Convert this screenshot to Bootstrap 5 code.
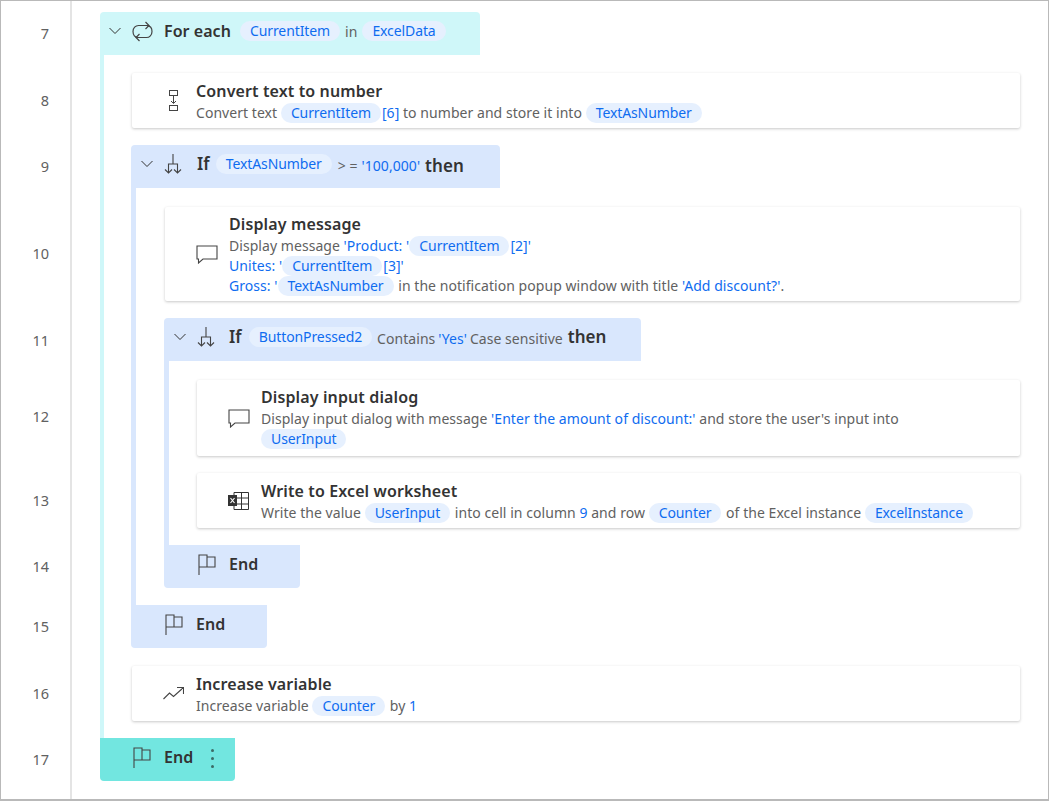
<!DOCTYPE html>
<html lang="en">
<head>
<meta charset="utf-8">
<title>Flow</title>
<link rel="stylesheet" href="https://cdn.jsdelivr.net/npm/bootstrap@5.3.0/dist/css/bootstrap.min.css">
<style>
html,body{margin:0;background:#fff}
body{font-family:"Noto Sans","Open Sans","Liberation Sans",sans-serif;color:#333;font-size:14px;overflow:hidden}
.frame{width:1049px;height:801px;border:1px solid #b9b9b9;border-width:1px 1px 2px 1px;overflow:hidden}
.gutter{width:69px;flex:none;border-right:2px solid #e4e4e4;padding-top:11px;color:#616161;font-size:14.5px;box-sizing:content-box}
.gutter>div{display:flex;align-items:center;justify-content:flex-end;padding-right:21px}
.h7,.h11,.h15,.h17{height:43px}.h8{height:91px}.h9{height:42px}.h10{height:130px}.h12{height:112px}.h13{height:55px}.h14{height:77px}.h16{height:90px}
.gutter>.h10,.gutter>.h11,.gutter>.h16{padding-top:2px}
.canvas{padding:11px 0 0 28px;width:948px;letter-spacing:.05px}
.head{height:43px;display:flex;align-items:center;border-radius:4px 4px 0 0;white-space:nowrap;padding-bottom:5px}
.tl{font-size:16px;font-weight:600;color:#333}
.tb{font-size:17px;font-weight:600;color:#333}
.loop-head{background:#cff7f9;width:380px}
.if-head{background:#d9e7fd}
.w369{width:369px}.w477{width:477px}
.chev{width:12px;height:8px;margin:0 11px 0 9px;flex:none}
.if-head .chev{margin-left:10px}
.ic{flex:none;display:block}
.rail-loop{border-left:4px solid #cff7f9;padding:18px 0 17px 28px}
.rail-if{border-left:5px solid #d9e7fd;padding:19px 0 17px 29px;margin-left:-1px}
.rail-if .rail-if{padding-left:28px}
.rail-if .rail-if .step{margin-right:0}
.end{height:43px;display:flex;align-items:center;font-size:16px;font-weight:600;border-radius:0 0 4px 4px;padding-bottom:5px}
.end-if{background:#d9e7fd;width:136px;margin-left:-1px;padding-left:34px;height:43px}
.end-loop{background:#72e6e0;width:135px;padding-left:33px}
.end svg{margin-right:13px;margin-top:1px}
.step{background:#fff;border-radius:2px;box-shadow:0 1px 3px rgba(0,0,0,.22);display:flex;align-items:center;margin-bottom:17px}
.step .ico{width:64px;flex:none;display:flex;justify-content:center;padding-left:19px}
.step .txt{padding-top:1px}
.h55{height:55px}.h94{height:94px}.h76{height:76px}
.h55 .txt{padding-top:3px}
.h76 .txt{padding-top:0;margin-top:-1px}
.t{font-size:16px;font-weight:600;line-height:20px;color:#333;margin-bottom:2px;letter-spacing:.12px}
.d{font-size:14px;line-height:20px;color:#616161;white-space:nowrap}
.v{color:#0f6cf0}
.pill{display:inline-block;height:20px;line-height:19px;padding:0 10px;border-radius:10px;background:#e6f0fe;color:#0f6cf0;margin:0 1px 0 0;letter-spacing:-.1px}
.head .pill{font-size:14px;margin:0 3px 0 0}
.mb0{margin-bottom:0}
.gray{color:#616161;font-size:14px;font-weight:400}
.low{margin-top:3px}
.dots{display:flex;flex-direction:column;gap:5px;margin-left:18px;margin-top:2px}
.dots i{display:block;width:3px;height:3px;background:#3c6b66;border-radius:50%}
.s1{margin-right:11px}.s2{margin:0 15px 0 0}.s3{margin-right:9px}.s4{margin-left:2px;margin-right:5px}.s5{margin-right:6px}
.s6{margin-left:3px;margin-right:4px}.s7{margin-right:5px}.s8{margin-left:2px}.s9{margin-right:3px}
.if-b .s2{margin-right:14px}.if-b .s5{margin-right:7px}
</style>
</head>
<body>
<div class="frame d-flex">
  <div class="gutter">
    <div class="h7">7</div><div class="h8">8</div><div class="h9">9</div><div class="h10">10</div><div class="h11">11</div><div class="h12">12</div><div class="h13">13</div><div class="h14">14</div><div class="h15">15</div><div class="h16">16</div><div class="h17">17</div>
  </div>
  <div class="canvas">
    <div class="head loop-head">
      <svg class="chev" viewBox="0 0 12 8"><path d="M.5 1 6 6.5 11.5 1" fill="none" stroke="#333" stroke-width="1"/></svg>
      <svg class="ic s1" width="21" height="21" viewBox="0 0 21 21" fill="none" stroke="#444" stroke-width="1.2"><path d="M6 16.500C3 16.500 1 14 1 10.500 1 7 3.500 4.500 6.500 4.500H17M13.500 1 17 4.500 13.500 8"/><path d="M15 4.600C18 4.800 20 7 20 10.500 20 14 17.500 16.500 14.500 16.500H4M7.500 13 4 16.500 7.500 20"/></svg>
      <span class="tl s3">For each</span>
      <span class="pill">CurrentItem</span><span class="gray s4">in</span><span class="pill">ExcelData</span>
    </div>
    <div class="rail-loop">
      <div class="step h55">
        <div class="ico"><svg width="12" height="21" viewBox="0 0 12 21" fill="none" stroke="#444"><rect x="1.500" y=".5" width="8" height="5"/><rect x="1.500" y="15.500" width="8" height="5"/><path d="M5.500 6v7M3 11l2.500 2.500L8 11"/></svg></div>
        <div class="txt"><div class="t">Convert text to number</div><div class="d">Convert text <span class="pill">CurrentItem</span><span class="v">[6]</span> to number and store it into <span class="pill">TextAsNumber</span></div></div>
      </div>
      <div class="head if-head w369" style="margin-left:-1px">
        <svg class="chev" viewBox="0 0 12 8"><path d="M.5 1 6 6.500 11.500 1" fill="none" stroke="#333"/></svg>
        <svg class="ic s2" width="18" height="20" viewBox="0 0 18 20" fill="none" stroke="#444" stroke-width="1.100"><path d="M9 0v10M4.500 19V10h9v9M1 15.500 4.500 19 8 15.500M10 15.500 13.500 19 17 15.500"/></svg>
        <span class="tb s5">If</span>
        <span class="pill">TextAsNumber</span><span class="gray low s6">&gt; =</span><span class="v low s7">'100,000'</span><span class="tb low">then</span>
      </div>
      <div class="rail-if">
        <div class="step h94">
          <div class="ico"><svg width="22" height="19" viewBox="0 0 22 19" fill="none" stroke="#444" stroke-width="1.100"><path d="M1 1h20v13H7l-4.500 4V14H1z"/></svg></div>
          <div class="txt"><div class="t">Display message</div><div class="d">Display message <span class="v">'Product: '</span><span class="pill">CurrentItem</span><span class="v">[2]'</span><br><span class="v">Unites: '</span><span class="pill">CurrentItem</span><span class="v">[3]'</span><br><span class="v">Gross: '</span><span class="pill">TextAsNumber</span> in the notification popup window with title <span class="v">'Add discount?'</span>.</div></div>
        </div>
        <div class="head if-head if-b w477" style="margin-left:-1px">
          <svg class="chev" viewBox="0 0 12 8"><path d="M.5 1 6 6.500 11.500 1" fill="none" stroke="#333"/></svg>
          <svg class="ic s2" width="18" height="20" viewBox="0 0 18 20" fill="none" stroke="#444" stroke-width="1.100"><path d="M9 0v10M4.500 19V10h9v9M1 15.500 4.500 19 8 15.500M10 15.500 13.500 19 17 15.500"/></svg>
          <span class="tb s5">If</span>
          <span class="pill">ButtonPressed2</span><span class="gray low s8 s9">Contains</span><span class="v low s9">'Yes'</span><span class="gray low s7">Case sensitive</span><span class="tb">then</span>
        </div>
        <div class="rail-if">
          <div class="step h76">
            <div class="ico"><svg width="22" height="19" viewBox="0 0 22 19" fill="none" stroke="#444" stroke-width="1.100"><path d="M1 1h20v13H7l-4.500 4V14H1z"/></svg></div>
            <div class="txt"><div class="t">Display input dialog</div><div class="d">Display input dialog with message <span class="v">'Enter the amount of discount:'</span> and store the user's input into<br><span class="pill">UserInput</span></div></div>
          </div>
          <div class="step h55 mb0">
            <div class="ico"><svg width="21" height="18" viewBox="0 0 21 18"><path d="M6 .5h14.500v17H6zM6 6h14.500M6 12h14.500M13.500.5v17" fill="none" stroke="#333"/><rect y="3" width="9" height="11" fill="#333"/><path d="M2.500 6 6.500 11M6.500 6 2.500 11" stroke="#fff" stroke-width="1.200"/></svg></div>
            <div class="txt"><div class="t">Write to Excel worksheet</div><div class="d">Write the value <span class="pill">UserInput</span> into cell in column <span class="v">9</span> and row <span class="pill">Counter</span> of the Excel instance <span class="pill">ExcelInstance</span></div></div>
          </div>
        </div>
        <div class="end end-if">
          <svg class="ic" width="18" height="21" viewBox="0 0 18 21" fill="none" stroke="#444" stroke-width="1.100"><path d="M1 21V1h8v12H1M9 3h8v10H9"/></svg><span>End</span>
        </div>
      </div>
      <div class="end end-if">
        <svg class="ic" width="18" height="21" viewBox="0 0 18 21" fill="none" stroke="#444" stroke-width="1.100"><path d="M1 21V1h8v12H1M9 3h8v10H9"/></svg><span>End</span>
      </div>
      <div class="step h55 mb0" style="margin-top:18px">
        <div class="ico"><svg width="21" height="13" viewBox="0 0 21 13" fill="none" stroke="#444" stroke-width="1.100"><path d="M.5 12 6.500 6l4 3.500L20 1M14 .5h6.500V7"/></svg></div>
        <div class="txt"><div class="t">Increase variable</div><div class="d">Increase variable <span class="pill">Counter</span> by <span class="v">1</span></div></div>
      </div>
    </div>
    <div class="end end-loop">
      <svg class="ic" width="18" height="21" viewBox="0 0 18 21" fill="none" stroke="#444" stroke-width="1.100"><path d="M1 21V1h8v12H1M9 3h8v10H9"/></svg><span>End</span>
      <div class="dots"><i></i><i></i><i></i></div>
    </div>
  </div>
</div>
</body>
</html>
